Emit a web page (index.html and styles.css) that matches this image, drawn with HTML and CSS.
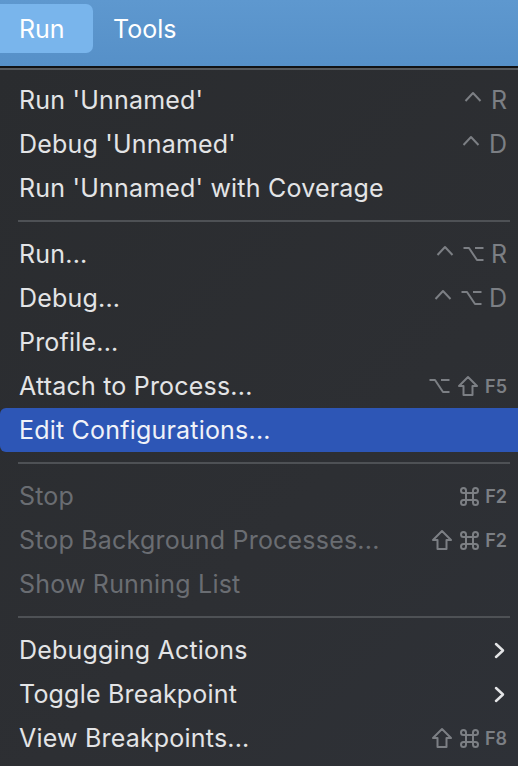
FILE: index.html
```html
<!DOCTYPE html>
<html>
<head>
<meta charset="utf-8">
<link rel="stylesheet" href="styles.css">
</head>
<body>
<div class="menubar">
  <div class="mb-item active">Run</div>
  <div class="mb-item">Tools</div>
</div>
<div class="menu">
  <div class="item"><span class="label">Run 'Unnamed'</span><span class="keys"><svg class="k-caret" viewBox="0 0 18 11"><polyline points="1.5,10 9,2 16.5,10"/></svg><span class="k-letter">R</span></span></div>
  <div class="item"><span class="label">Debug 'Unnamed'</span><span class="keys"><svg class="k-caret" viewBox="0 0 18 11"><polyline points="1.5,10 9,2 16.5,10"/></svg><span class="k-letter">D</span></span></div>
  <div class="item"><span class="label">Run 'Unnamed' with Coverage</span></div>
  <div class="sep"></div>
  <div class="item"><span class="label">Run...</span><span class="keys"><svg class="k-caret" viewBox="0 0 18 11"><polyline points="1.5,10 9,2 16.5,10"/></svg><svg class="k-opt" viewBox="0 0 21 16"><path d="M0.5 2 H6 L14 14 H20.5 M12 2 H20.5"/></svg><span class="k-letter">R</span></span></div>
  <div class="item"><span class="label">Debug...</span><span class="keys"><svg class="k-caret" viewBox="0 0 18 11"><polyline points="1.5,10 9,2 16.5,10"/></svg><svg class="k-opt" viewBox="0 0 21 16"><path d="M0.5 2 H6 L14 14 H20.5 M12 2 H20.5"/></svg><span class="k-letter">D</span></span></div>
  <div class="item"><span class="label">Profile...</span></div>
  <div class="item"><span class="label">Attach to Process...</span><span class="keys"><svg class="k-opt" viewBox="0 0 21 16"><path d="M0.5 2 H6 L14 14 H20.5 M12 2 H20.5"/></svg><svg class="k-shift" viewBox="0 0 22 22"><path d="M11 2 L20 11 H15.5 V20 H6.5 V11 H2 Z"/></svg><span class="k-fn">F5</span></span></div>
  <div class="item selected"><span class="label">Edit Configurations...</span></div>
  <div class="sep"></div>
  <div class="item disabled"><span class="label">Stop</span><span class="keys"><svg class="k-cmd" viewBox="0 0 19 19"><path d="M6 6 V3.5 A2.5 2.5 0 1 0 3.5 6 H15.5 A2.5 2.5 0 1 0 13 3.5 V15.5 A2.5 2.5 0 1 0 15.5 13 H3.5 A2.5 2.5 0 1 0 6 15.5 Z"/></svg><span class="k-fn">F2</span></span></div>
  <div class="item disabled"><span class="label">Stop Background Processes...</span><span class="keys"><svg class="k-shift" viewBox="0 0 22 22"><path d="M11 2 L20 11 H15.5 V20 H6.5 V11 H2 Z"/></svg><svg class="k-cmd" viewBox="0 0 19 19"><path d="M6 6 V3.5 A2.5 2.5 0 1 0 3.5 6 H15.5 A2.5 2.5 0 1 0 13 3.5 V15.5 A2.5 2.5 0 1 0 15.5 13 H3.5 A2.5 2.5 0 1 0 6 15.5 Z"/></svg><span class="k-fn">F2</span></span></div>
  <div class="item disabled"><span class="label">Show Running List</span></div>
  <div class="sep"></div>
  <div class="item"><span class="label">Debugging Actions</span><span class="keys"><svg class="k-chev" viewBox="0 0 11 17"><polyline points="2,2 9,8.5 2,15"/></svg></span></div>
  <div class="item"><span class="label">Toggle Breakpoint</span><span class="keys"><svg class="k-chev" viewBox="0 0 11 17"><polyline points="2,2 9,8.5 2,15"/></svg></span></div>
  <div class="item"><span class="label">View Breakpoints...</span><span class="keys"><svg class="k-shift" viewBox="0 0 22 22"><path d="M11 2 L20 11 H15.5 V20 H6.5 V11 H2 Z"/></svg><svg class="k-cmd" viewBox="0 0 19 19"><path d="M6 6 V3.5 A2.5 2.5 0 1 0 3.5 6 H15.5 A2.5 2.5 0 1 0 13 3.5 V15.5 A2.5 2.5 0 1 0 15.5 13 H3.5 A2.5 2.5 0 1 0 6 15.5 Z"/></svg><span class="k-fn">F8</span></span></div>
</div>
</body>
</html>
```
FILE: styles.css
```css
html, body {
  margin: 0;
  padding: 0;
}
body {
  width: 518px;
  height: 766px;
  overflow: hidden;
  background: #2c2e32;
  font-family: Inter, "Noto Sans", sans-serif;
  -webkit-font-smoothing: antialiased;
}
.menubar {
  height: 68px;
  box-sizing: border-box;
  padding-top: 4px;
  display: flex;
  align-items: flex-start;
  background: linear-gradient(#5e98cf, #5690c8);
  border-bottom: 2px solid #111214;
  color: #ffffff;
  font-size: 25px;
}
.mb-item {
  height: 49px;
  display: flex;
  align-items: center;
  padding: 0 20px;
}
.mb-item.active {
  width: 93px;
  box-sizing: border-box;
  padding-left: 19px;
  background: #79b5ec;
  border-radius: 0 7px 7px 0;
}
.menu {
  border-top: 2px solid #55585c;
  padding-top: 8px;
  background: linear-gradient(135deg, #2a2c2f 0%, #2d2f33 60%, #2e3137 100%);
  height: 700px;
}
.item {
  height: 44px;
  display: flex;
  align-items: center;
  justify-content: space-between;
  padding: 0 11px 0 19px;
  color: #e3e4e6;
  font-size: 25px;
}
.label {
  letter-spacing: 0.2px;
}
.item.selected {
  background: #2d56b6;
  border-radius: 6px 0 0 6px;
  color: #f0f2f8;
}
.item.disabled {
  color: #6a6d72;
}
.sep {
  height: 2px;
  margin: 10px 8px 10px 18px;
  background: #4e5155;
}
.keys {
  display: flex;
  align-items: center;
  gap: 7px;
  color: #7c7f84;
}
.keys svg {
  fill: none;
  stroke: #7c7f84;
  stroke-width: 2;
  stroke-linejoin: round;
}
.k-caret {
  width: 18px;
  height: 11px;
  margin-top: -8px;
  margin-right: 2px;
}
.k-opt {
  width: 21px;
  height: 16px;
}
.k-shift {
  width: 22px;
  height: 22px;
}
.k-cmd {
  width: 19px;
  height: 19px;
}
.k-letter {
  font-size: 25px;
}
.k-fn {
  font-size: 18px;
  font-weight: 600;
  margin-left: -1px;
}
.k-chev {
  width: 11px;
  height: 17px;
  margin-right: 2px;
}
.keys .k-chev {
  stroke: #e3e4e6;
  stroke-width: 2.5;
  stroke-linecap: round;
}
```
